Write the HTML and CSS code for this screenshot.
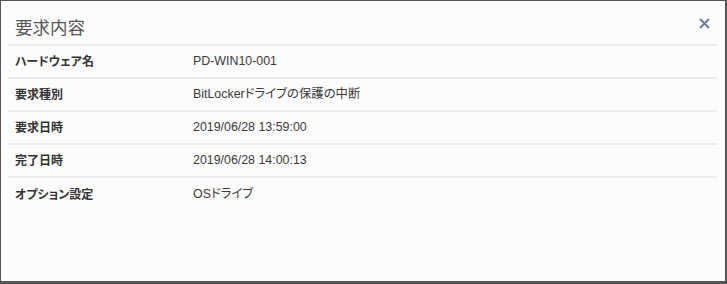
FILE: index.html
```html
<!DOCTYPE html>
<html lang="ja">
<head>
<meta charset="utf-8">
<title>要求内容</title>
<link rel="stylesheet" href="styles.css">
</head>
<body>
<div class="modal">
  <div class="modal-header">
    <h4 class="modal-title">要求内容</h4>
    <button class="close" type="button" aria-label="閉じる">
      <svg width="11" height="11" viewBox="0 0 11 11"><path d="M1 1L10 10M10 1L1 10" stroke="#6e7b9b" stroke-width="2" fill="none"/></svg>
    </button>
  </div>
  <div class="rows">
    <div class="row"><div class="label">ハードウェア名</div><div class="value">PD-WIN10-001</div></div>
    <div class="row"><div class="label">要求種別</div><div class="value">BitLockerドライブの保護の中断</div></div>
    <div class="row"><div class="label">要求日時</div><div class="value">2019/06/28 13:59:00</div></div>
    <div class="row"><div class="label">完了日時</div><div class="value">2019/06/28 14:00:13</div></div>
    <div class="row last"><div class="label">オプション設定</div><div class="value">OSドライブ</div></div>
  </div>
</div>
</body>
</html>
```
FILE: styles.css
```css
* { box-sizing: border-box; }
html, body { margin: 0; padding: 0; }
body {
  font-family: "Liberation Sans", "Noto Sans CJK JP", sans-serif;
  color: #333;
  background: #fcfcfc;
}
.modal {
  width: 727px;
  height: 284px;
  background: #fcfcfc;
  border-style: solid;
  border-color: #555;
  border-width: 1px 2px 3px 1px;
  padding: 0 8px 0 7px;
}
.modal-header {
  display: flex;
  align-items: flex-start;
  justify-content: space-between;
  height: 45px;
  padding: 15px 0 0 7px;
  border-bottom: 2px solid #ececec;
}
.modal-title {
  margin: 0;
  font-family: "Noto Sans CJK JP", sans-serif;
  font-weight: normal;
  font-size: 17.5px;
  line-height: 22px;
  color: #555;
}
.close {
  border: 0;
  background: none;
  padding: 0;
  margin: 2px 7px 0 0;
  width: 11px;
  height: 11px;
  display: flex;
}
.row {
  display: flex;
  align-items: center;
  height: 33px;
  padding: 0 0 1px 7px;
  border-bottom: 2px solid #ececec;
  font-size: 12px;
  line-height: 16px;
}
.row.last {
  border-bottom: 0;
}
.label {
  width: 178px;
  font-family: "Noto Sans CJK JP", sans-serif;
  font-weight: bold;
  font-feature-settings: "palt";
  color: #333;
}
.value {
  font-size: 12.4px;
  color: #3a3a3a;
  font-feature-settings: "palt";
}
```
